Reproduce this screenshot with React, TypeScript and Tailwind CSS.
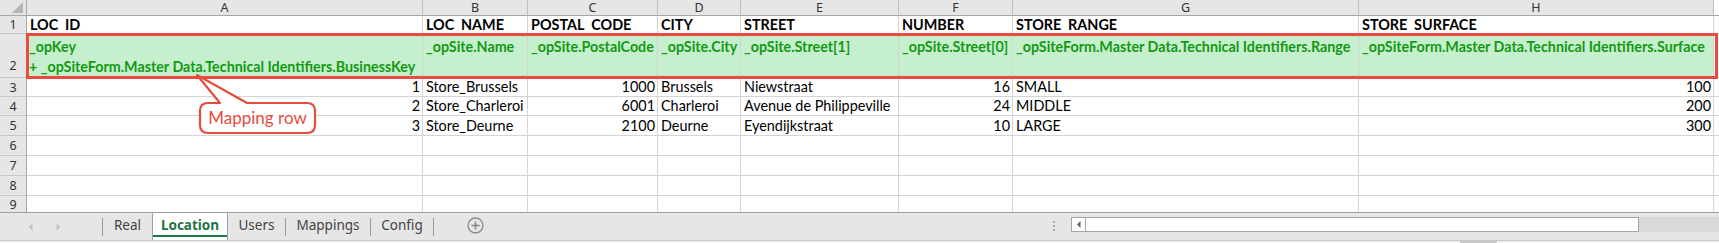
import React from "react";

const cellFont = "font-['Lato',sans-serif]";
const uiFont = "font-['Noto_Sans',sans-serif]";

const colClasses = ["A", "B", "C", "D", "E", "F", "G", "H"];

type Align = "l" | "r";
const aligns: Align[] = ["r", "l", "r", "l", "l", "r", "l", "r"];

const row1: [string, string][] = [
  ["LOC", "ID"],
  ["LOC", "NAME"],
  ["POSTAL", "CODE"],
  ["CITY", ""],
  ["STREET", ""],
  ["NUMBER", ""],
  ["STORE", "RANGE"],
  ["STORE", "SURFACE"],
];
const row2 = [
  "",
  "_opSite.Name",
  "_opSite.PostalCode",
  "_opSite.City",
  "_opSite.Street[1]",
  "_opSite.Street[0]",
  "_opSiteForm.Master Data.Technical Identifiers.Range",
  "_opSiteForm.Master Data.Technical Identifiers.Surface",
];
const data = [
  ["1", "Store_Brussels", "1000", "Brussels", "Niewstraat", "16", "SMALL", "100"],
  ["2", "Store_Charleroi", "6001", "Charleroi", "Avenue de Philippeville", "24", "MIDDLE", "200"],
  ["3", "Store_Deurne", "2100", "Deurne", "Eyendijkstraat", "10", "LARGE", "300"],
];

function RowHeader({ n, last }: { n: string; last?: boolean }) {
  return (
    <div
      className={`flex items-center justify-center bg-[#e6e6e6] border-r border-[#a6a6a6] ${
        last ? "" : "border-b border-b-[#c8c8c8]"
      } text-[12.5px] leading-[15px] text-[#333] ${uiFont}`}
    >
      {n}
    </div>
  );
}

export default function App() {
  return (
    <div className="relative w-[1719px] h-[243px] overflow-hidden bg-white">
      <div className="grid grid-cols-[27px_396px_105px_130px_83px_158px_114px_346px_355px_1fr] grid-rows-[16px_18px_44px_19px_19px_20px_20px_20px_20px_16px]">
        {/* column header row */}
        <div className="relative bg-[#e6e6e6] border-r border-b border-[#a6a6a6]">
          <svg className="absolute left-0 top-0" width="26" height="15" viewBox="0 0 26 15">
            <polygon points="23,2 23,13 12,13" fill="#b5b5b5" />
          </svg>
        </div>
        {colClasses.map((c) => (
          <div
            key={c}
            className={`flex items-center justify-center bg-[#e6e6e6] border-r border-r-[#c0c0c0] border-b border-b-[#a6a6a6] text-[12.5px] leading-[14px] text-[#333] ${uiFont}`}
          >
            {c}
          </div>
        ))}
        <div className="bg-white border-b border-[#a6a6a6]" />

        {/* row 1 */}
        <RowHeader n="1" />
        {row1.map(([a, b], i) => (
          <div
            key={i}
            className={`flex items-end overflow-hidden border-r border-b border-[#d4d4d4] px-[3px] text-[14.4px] leading-[17px] font-bold text-black ${cellFont}`}
          >
            <span className="whitespace-nowrap">
              {a}
              {b ? (
                <>
                  <span className="text-transparent">_</span>
                  {b}
                </>
              ) : null}
            </span>
          </div>
        ))}
        <div className="border-b border-[#d4d4d4]" />

        {/* row 2 mapping */}
        <div className="flex items-end justify-center pb-[3px] bg-[#e6e6e6] border-r border-[#a6a6a6] border-b border-b-[#c8c8c8] text-[12.5px] leading-[16px] text-[#333] font-['Noto_Sans',sans-serif]">
          2
        </div>
        <div className={`bg-[#c6efce] border-r border-b border-[#d4d4d4] px-[2px] pt-[3px] text-[14.3px] leading-[20px] font-bold text-[#139a13] ${cellFont}`}>
          <div className="whitespace-nowrap">_opKey</div>
          <div className="whitespace-nowrap">+ _opSiteForm.Master Data.Technical Identifiers.BusinessKey</div>
        </div>
        {row2.slice(1).map((t, i) => (
          <div
            key={i}
            className={`bg-[#c6efce] border-r border-b border-[#d4d4d4] px-[3px] pt-[3px] text-[14.3px] leading-[20px] font-bold text-[#139a13] whitespace-nowrap overflow-visible ${cellFont}`}
          >
            {t}
          </div>
        ))}
        <div className="border-b border-[#d4d4d4]" />

        {/* data rows */}
        {data.map((r, ri) => (
          <React.Fragment key={ri}>
            <RowHeader n={String(ri + 3)} />
            {r.map((t, i) => (
              <div
                key={i}
                className={`flex items-center overflow-hidden border-r border-b border-[#d4d4d4] px-[3px] text-[14.4px] leading-[18px] text-black ${cellFont} ${
                  aligns[i] === "r" ? "justify-end pr-[2px]" : "justify-start"
                }`}
              >
                <span className="whitespace-nowrap">{t}</span>
              </div>
            ))}
            <div className="border-b border-[#d4d4d4]" />
          </React.Fragment>
        ))}

        {/* empty rows 6-9 */}
        {["6", "7", "8", "9"].map((n) => (
          <React.Fragment key={n}>
            <RowHeader n={n} last={n === "9"} />
            {colClasses.map((c) => (
              <div key={c} className={`border-r border-[#d4d4d4] ${n === "9" ? "" : "border-b"}`} />
            ))}
            <div className={`border-[#d4d4d4] ${n === "9" ? "" : "border-b"}`} />
          </React.Fragment>
        ))}
      </div>

      {/* sheet tabs bar */}
      <div className={`flex h-[28px] items-stretch bg-[#e6e6e6] border-t border-[#a0a0a0] text-[13.5px] text-[#444] ${uiFont}`}>
        <div className="flex w-[102px] items-center pl-[28px] gap-[23px]">
          <svg width="5" height="8" viewBox="0 0 5 8">
            <polygon points="4.5,0 4.5,8 0.5,4" fill="#c4c4c4" />
          </svg>
          <svg width="5" height="8" viewBox="0 0 5 8">
            <polygon points="0.5,0 0.5,8 4.5,4" fill="#c4c4c4" />
          </svg>
        </div>
        <div className="w-px self-center h-[18px] bg-[#9b9b9b]" />
        <div className="flex w-[49px] items-center justify-center pb-[2px]">Real</div>
        <div className="relative flex w-[76px] items-center justify-center bg-white border-x border-[#a0a0a0] pb-[2px] font-bold text-[#217346]">
          Location
          <div className="absolute left-0 right-0 bottom-[3px] h-[2px] bg-[#217346]" />
        </div>
        <div className="flex w-[57px] items-center justify-center pb-[2px]">Users</div>
        <div className="w-px self-center h-[18px] bg-[#9b9b9b]" />
        <div className="flex w-[84px] items-center justify-center pb-[2px]">Mappings</div>
        <div className="w-px self-center h-[18px] bg-[#9b9b9b]" />
        <div className="flex w-[62px] items-center justify-center pb-[2px]">Config</div>
        <div className="w-px self-center h-[18px] bg-[#9b9b9b]" />
        <div className="w-[33px]" />
        <div className="flex items-center pb-[2px]">
          <svg width="17" height="17" viewBox="0 0 17 17">
            <circle cx="8.5" cy="8.5" r="7.5" fill="none" stroke="#8a8a8a" strokeWidth="1.3" />
            <line x1="8.5" y1="4.5" x2="8.5" y2="12.5" stroke="#8a8a8a" strokeWidth="1.6" />
            <line x1="4.5" y1="8.5" x2="12.5" y2="8.5" stroke="#8a8a8a" strokeWidth="1.6" />
          </svg>
        </div>
        <div className="w-[569px]" />
        <div className="flex flex-col justify-center gap-[2px] w-[3px] pb-[1px]">
          <div className="h-[2px] w-[2px] bg-[#a8a8a8]" />
          <div className="h-[2px] w-[2px] bg-[#a8a8a8]" />
          <div className="h-[2px] w-[2px] bg-[#a8a8a8]" />
        </div>
        <div className="w-[15px]" />
        <div className="flex items-center flex-1 pb-[4px]">
          <div className="flex h-[15px] w-[568px] bg-white border border-[#a6a6a6]">
            <div className="flex w-[14px] items-center justify-center border-r border-[#a6a6a6]">
              <svg width="4" height="7" viewBox="0 0 4 7">
                <polygon points="3.5,0 3.5,7 0,3.5" fill="#606060" />
              </svg>
            </div>
          </div>
          <div className="h-[15px] flex-1 bg-[#d9d9d9]" />
        </div>
      </div>
      <div className="relative h-[3px] bg-[#f0f0f0] border-t border-[#c8c8c8]">
        <div className="absolute left-[1460px] top-0 h-[2px] w-[37px] bg-[#c8c8c8]" />
      </div>

      {/* red highlight around mapping row */}
      <div className="pointer-events-none absolute left-[26px] top-[33px] w-[1692px] h-[46px] border-[3px] border-[#e74c3c]" />

      {/* callout */}
      <div className="pointer-events-none absolute left-[190px] top-[70px] w-[130px] h-[68px]">
        <svg className="absolute left-0 top-0" width="130" height="68" viewBox="0 0 130 68">
          <path
            d="M 18 33 L 30 33 L 7 5 L 57 33 L 117 33 Q 125 33 125 41 L 125 55 Q 125 63 117 63 L 18 63 Q 10 63 10 55 L 10 41 Q 10 33 18 33 Z"
            fill="white"
            stroke="#e74c3c"
            strokeWidth="2.2"
            strokeLinejoin="round"
          />
        </svg>
        <div className={`absolute left-[10px] top-[33px] w-[115px] h-[30px] flex items-center justify-center text-[17px] text-[#e74c3c] ${cellFont}`}>
          Mapping row
        </div>
      </div>
    </div>
  );
}
